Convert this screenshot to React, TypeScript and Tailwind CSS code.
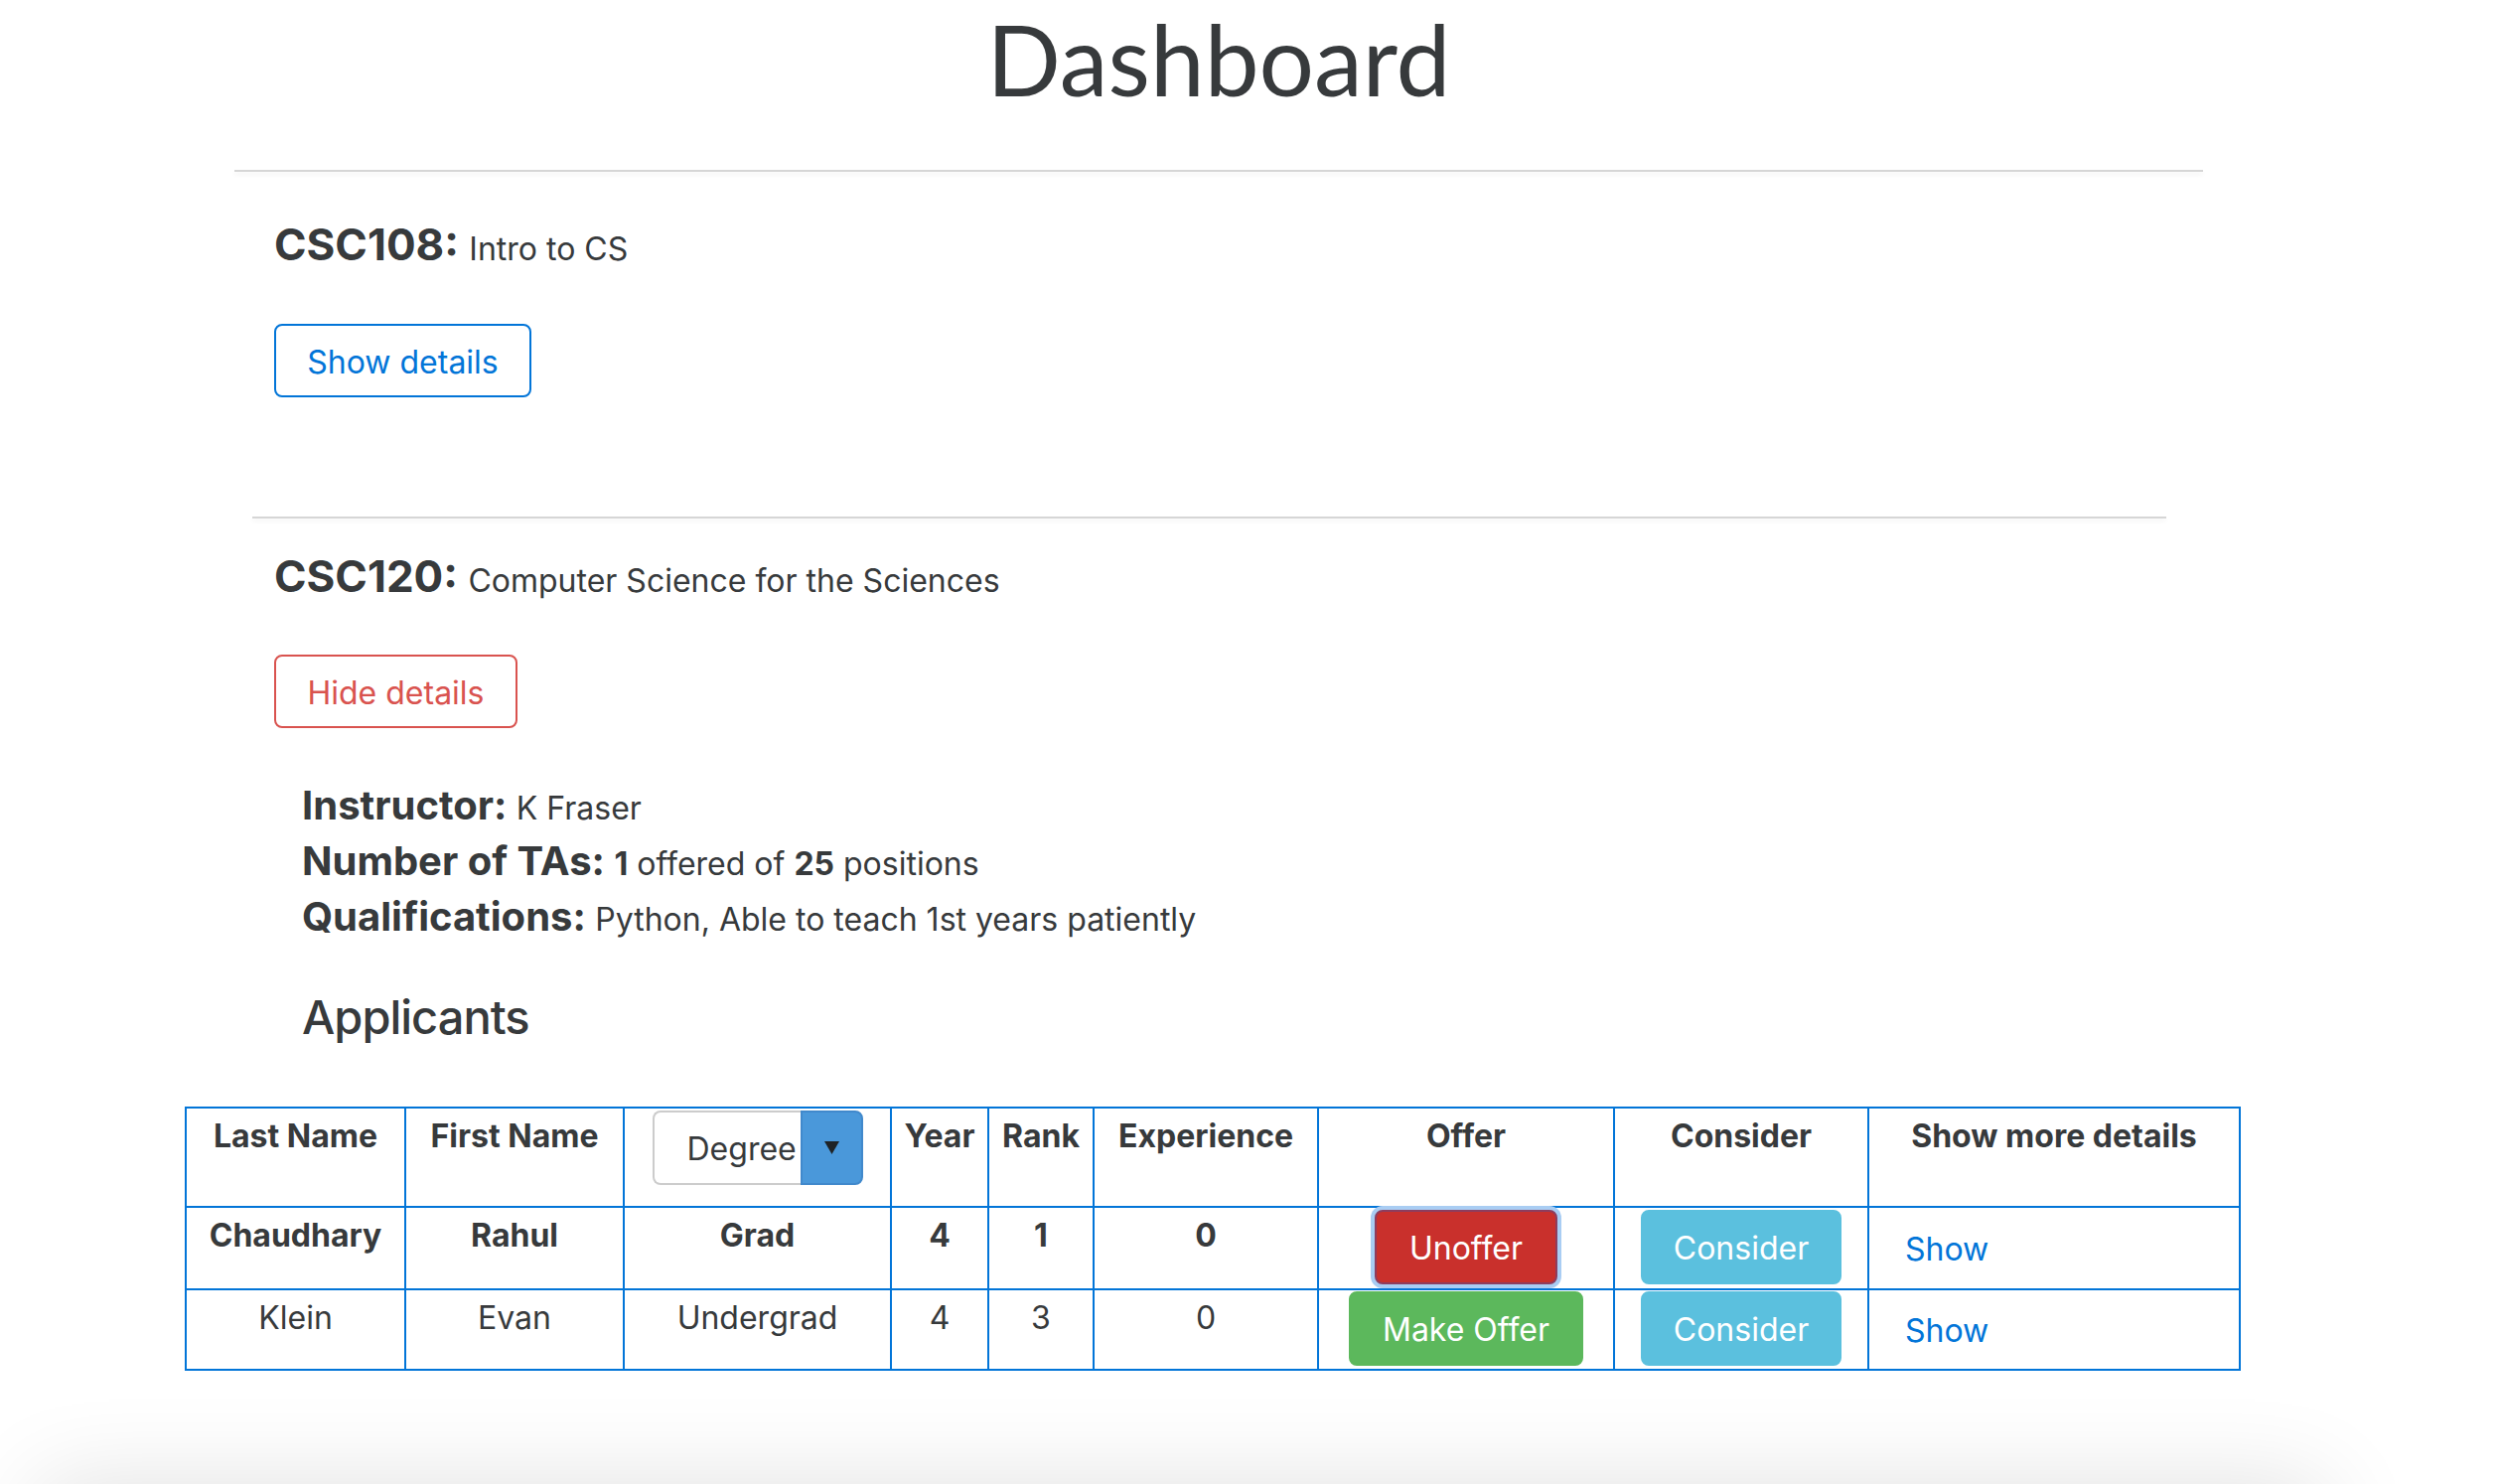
import React from "react";

function HeadCell({ first, children, w }: { first?: boolean; children: React.ReactNode; w: number }) {
  return (
    <th
      style={{ width: w }}
      className={
        "p-0 align-top border-t-2 border-r-2 border-b-2 border-[#0275d8] " + (first ? "border-l-2" : "")
      }
    >
      <div className="h-[98px] pt-[4px] text-center text-[32px] leading-[48px] font-bold">{children}</div>
    </th>
  );
}

function TextCell({ first, bold, children, h }: { first?: boolean; bold?: boolean; children: React.ReactNode; h: string }) {
  return (
    <td className={"p-0 align-top border-r-2 border-b-2 border-[#0275d8] " + (first ? "border-l-2" : "")}>
      <div className={h + " pt-[4px] text-center text-[32px] leading-[48px] " + (bold ? "font-bold" : "font-normal")}>
        {children}
      </div>
    </td>
  );
}

function Btn({ className, children }: { className: string; children: React.ReactNode }) {
  return (
    <button
      className={
        "flex h-[75px] items-center justify-center rounded-[8px] border-2 pt-[3px] text-[32px] leading-[40px] text-white " +
        className
      }
    >
      {children}
    </button>
  );
}

export default function App() {
  return (
    <div className="h-[1494px] w-[2520px] overflow-hidden bg-white font-[family-name:Inter,sans-serif] text-[#373a3c]">
      <h1 className="ml-[236px] w-[1982px] text-center font-[family-name:Lato,sans-serif] text-[98px] font-normal leading-[118px] text-[#373a3c]">
        Dashboard
      </h1>

      <div className="ml-[236px] mt-[53px] h-[2px] w-[1982px] bg-[#d6d6d6] shadow-[0_3px_4px_rgba(0,0,0,0.06)]" />

      <section className="pl-[276px]">
        <h4 className="mt-[45px] text-[44px] font-bold leading-[56px]">
          CSC108: <span className="text-[32px] font-normal leading-none">Intro to CS</span>
        </h4>
        <button className="mt-[52px] flex h-[74px] w-[259px] items-center justify-center rounded-[8px] border-2 border-[#0275d8] pt-[3px] text-[32px] leading-[40px] text-[#0275d8]">
          Show details
        </button>
      </section>

      <div className="ml-[254px] mt-[120px] h-[2px] w-[1927px] bg-[#d6d6d6] shadow-[0_3px_4px_rgba(0,0,0,0.06)]" />

      <section className="pl-[276px]">
        <h4 className="mt-[30px] text-[44px] font-bold leading-[56px]">
          CSC120: <span className="text-[32px] font-normal leading-none">Computer Science for the Sciences</span>
        </h4>
        <button className="mt-[51px] flex h-[74px] w-[245px] items-center justify-center rounded-[8px] border-2 border-[#d9534f] pt-[3px] text-[32px] leading-[40px] text-[#d9534f]">
          Hide details
        </button>
      </section>

      <section className="mt-[50px] pl-[304px]">
        <div className="text-[40px] font-bold leading-[56px]">
          Instructor: <span className="text-[32px] font-normal leading-none">K Fraser</span>
        </div>
        <div className="text-[40px] font-bold leading-[56px]">
          Number of TAs:{" "}
          <span className="text-[32px] font-normal leading-none">
            <b className="font-bold">1</b> offered of <b className="font-bold">25</b> positions
          </span>
        </div>
        <div className="text-[40px] font-bold leading-[56px]">
          Qualifications:{" "}
          <span className="text-[32px] font-normal leading-none">Python, Able to teach 1st years patiently</span>
        </div>
        <h3 className="mt-[45px] text-[47px] font-medium leading-[56px] tracking-[-1px]">Applicants</h3>
      </section>

      <table className="ml-[186px] mt-[62px] w-[2070px] table-fixed border-separate border-spacing-0">
        <thead>
          <tr>
            <HeadCell first w={223}>Last Name</HeadCell>
            <HeadCell w={220}>First Name</HeadCell>
            <th style={{ width: 269 }} className="p-0 align-top border-t-2 border-r-2 border-b-2 border-[#0275d8]">
              <div className="flex h-[98px] justify-center pt-[2px]">
                <div className="flex h-[75px]">
                  <div className="flex w-[149px] items-center rounded-l-[8px] border-2 border-r-0 border-[#cccccc] bg-white pl-[33px] pt-[3px] text-[32px] font-normal leading-[40px]">
                    Degree
                  </div>
                  <div className="flex w-[63px] items-center justify-center rounded-r-[8px] border-2 border-[#4189cc] bg-[#4a98da]">
                    <svg width="15" height="13" viewBox="0 0 15 13">
                      <path d="M0 0 H15 L7.5 13 Z" fill="#1f2326" />
                    </svg>
                  </div>
                </div>
              </div>
            </th>
            <HeadCell w={98}>Year</HeadCell>
            <HeadCell w={106}>Rank</HeadCell>
            <HeadCell w={226}>Experience</HeadCell>
            <HeadCell w={298}>Offer</HeadCell>
            <HeadCell w={256}>Consider</HeadCell>
            <HeadCell w={374}>Show more details</HeadCell>
          </tr>
        </thead>
        <tbody>
          <tr>
            <TextCell first bold h="h-[81px]">Chaudhary</TextCell>
            <TextCell bold h="h-[81px]">Rahul</TextCell>
            <TextCell bold h="h-[81px]">Grad</TextCell>
            <TextCell bold h="h-[81px]">4</TextCell>
            <TextCell bold h="h-[81px]">1</TextCell>
            <TextCell bold h="h-[81px]">0</TextCell>
            <td className="p-0 align-top border-r-2 border-b-2 border-[#0275d8]">
              <div className="flex h-[81px] justify-center pt-[2px]">
                <Btn className="w-[184px] border-[#8d3d5e] bg-[#c9302c] shadow-[0_0_0_4px_#a9cdf3]">Unoffer</Btn>
              </div>
            </td>
            <td className="p-0 align-top border-r-2 border-b-2 border-[#0275d8]">
              <div className="flex h-[81px] justify-center pt-[2px]">
                <Btn className="w-[202px] border-[#5bc0de] bg-[#5bc0de]">Consider</Btn>
              </div>
            </td>
            <td className="p-0 align-top border-r-2 border-b-2 border-[#0275d8]">
              <div className="h-[81px] pl-[36px] pt-[22px] text-[32px] leading-[40px] text-[#0275d8]">Show</div>
            </td>
          </tr>
          <tr>
            <TextCell first h="h-[79px]">Klein</TextCell>
            <TextCell h="h-[79px]">Evan</TextCell>
            <TextCell h="h-[79px]">Undergrad</TextCell>
            <TextCell h="h-[79px]">4</TextCell>
            <TextCell h="h-[79px]">3</TextCell>
            <TextCell h="h-[79px]">0</TextCell>
            <td className="p-0 align-top border-r-2 border-b-2 border-[#0275d8]">
              <div className="flex h-[79px] justify-center pt-[1px]">
                <Btn className="w-[236px] border-[#5cb85c] bg-[#5cb85c]">Make Offer</Btn>
              </div>
            </td>
            <td className="p-0 align-top border-r-2 border-b-2 border-[#0275d8]">
              <div className="flex h-[79px] justify-center pt-[1px]">
                <Btn className="w-[202px] border-[#5bc0de] bg-[#5bc0de]">Consider</Btn>
              </div>
            </td>
            <td className="p-0 align-top border-r-2 border-b-2 border-[#0275d8]">
              <div className="h-[79px] pl-[36px] pt-[21px] text-[32px] leading-[40px] text-[#0275d8]">Show</div>
            </td>
          </tr>
        </tbody>
      </table>

      <div className="ml-[40px] mt-[114px] h-[300px] w-[2300px] bg-white shadow-[0_0_90px_rgba(0,0,0,0.12)]" />
    </div>
  );
}
